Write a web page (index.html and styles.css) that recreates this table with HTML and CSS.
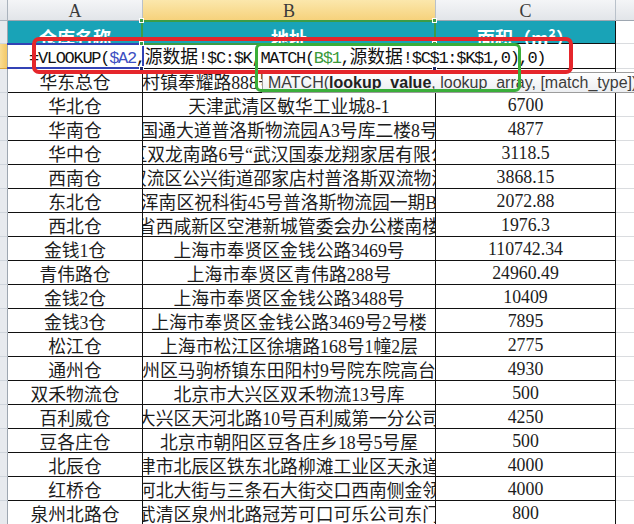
FILE: index.html
```html
<!DOCTYPE html>
<html lang="zh-CN">
<head>
<meta charset="utf-8">
<title>Sheet</title>
<link rel="stylesheet" href="styles.css">
</head>
<body>
<div class="sheet">
  <div class="grid">
    <div class="corner"></div>
    <div class="colhead">A</div>
    <div class="colhead sel">B</div>
    <div class="colhead">C</div>
    <div class="colhead rest-head"></div>

    <div class="rowhead r1"></div>
    <div class="th">仓库名称</div>
    <div class="th">地址</div>
    <div class="th">面积（m²）</div>
    <div class="rest r1"></div>

    <div class="rowhead sel r2"></div>
    <div class="edit r2"><span class="formula">=VLOOKUP(<span class="ref-a">$A2</span>,<span class="cjk">源数据</span>!$C:$K,MATCH(<span class="ref-b">B$1</span>,<span class="cjk">源数据</span>!$C$1:$K$1,0),0)</span></div>
    <div class="rest r2"></div>

    <div class="rowhead"></div><div class="td">华东总仓</div><div class="td"><span>青村镇奉耀路888号普洛斯物流园一号仓库</span></div><div class="td"></div><div class="rest"></div>
    <div class="rowhead"></div><div class="td">华北仓</div><div class="td"><span>天津武清区敏华工业城8-1</span></div><div class="td">6700</div><div class="rest"></div>
    <div class="rowhead"></div><div class="td">华南仓</div><div class="td"><span>区国通大道普洛斯物流园A3号库二楼8号仓</span></div><div class="td">4877</div><div class="rest"></div>
    <div class="rowhead"></div><div class="td">华中仓</div><div class="td"><span>区双龙南路6号“武汉国泰龙翔家居有限公</span></div><div class="td">3118.5</div><div class="rest"></div>
    <div class="rowhead"></div><div class="td">西南仓</div><div class="td"><span>双流区公兴街道邵家店村普洛斯双流物流</span></div><div class="td">3868.15</div><div class="rest"></div>
    <div class="rowhead"></div><div class="td">东北仓</div><div class="td"><span>阳浑南区祝科街45号普洛斯物流园一期B库</span></div><div class="td">2072.88</div><div class="rest"></div>
    <div class="rowhead"></div><div class="td">西北仓</div><div class="td"><span>省西咸新区空港新城管委会办公楼南楼</span></div><div class="td">1976.3</div><div class="rest"></div>
    <div class="rowhead"></div><div class="td">金钱1仓</div><div class="td"><span>上海市奉贤区金钱公路3469号</span></div><div class="td">110742.34</div><div class="rest"></div>
    <div class="rowhead"></div><div class="td">青伟路仓</div><div class="td"><span>上海市奉贤区青伟路288号</span></div><div class="td">24960.49</div><div class="rest"></div>
    <div class="rowhead"></div><div class="td">金钱2仓</div><div class="td"><span>上海市奉贤区金钱公路3488号</span></div><div class="td">10409</div><div class="rest"></div>
    <div class="rowhead"></div><div class="td">金钱3仓</div><div class="td"><span>上海市奉贤区金钱公路3469号2号楼</span></div><div class="td">7895</div><div class="rest"></div>
    <div class="rowhead"></div><div class="td">松江仓</div><div class="td"><span>上海市松江区徐塘路168号1幢2层</span></div><div class="td">2775</div><div class="rest"></div>
    <div class="rowhead"></div><div class="td">通州仓</div><div class="td"><span>通州区马驹桥镇东田阳村9号院东院高台库</span></div><div class="td">4930</div><div class="rest"></div>
    <div class="rowhead"></div><div class="td">双禾物流仓</div><div class="td"><span>北京市大兴区双禾物流13号库</span></div><div class="td">500</div><div class="rest"></div>
    <div class="rowhead"></div><div class="td">百利威仓</div><div class="td"><span>大兴区天河北路10号百利威第一分公司</span></div><div class="td">4250</div><div class="rest"></div>
    <div class="rowhead"></div><div class="td">豆各庄仓</div><div class="td"><span>北京市朝阳区豆各庄乡18号5号屋</span></div><div class="td">500</div><div class="rest"></div>
    <div class="rowhead"></div><div class="td">北辰仓</div><div class="td"><span>天津市北辰区铁东北路柳滩工业区天永道路</span></div><div class="td">4000</div><div class="rest"></div>
    <div class="rowhead"></div><div class="td">红桥仓</div><div class="td"><span>河北大街与三条石大街交口西南侧金领</span></div><div class="td">4000</div><div class="rest"></div>
    <div class="rowhead"></div><div class="td">泉州北路仓</div><div class="td"><span>武清区泉州北路冠芳可口可乐公司东门</span></div><div class="td">800</div><div class="rest"></div>
  </div>

  <div class="range-b1"></div>
  <div class="range-a2"></div>
  <div class="handle h1"></div>
  <div class="handle h2"></div>
  <div class="handle h3"></div>
  <div class="handle h4"></div>
  <div class="handle h5 dark"></div>
  <div class="handle h6 dark"></div>

  <div class="tooltip">MATCH(<b>lookup_value</b>, lookup_array, [match_type])</div>
  <div class="mark-red"></div>
  <div class="mark-green"></div>
</div>
</body>
</html>
```

FILE: styles.css
```css
* { box-sizing: border-box; }
html, body { margin: 0; padding: 0; background: #fff; }

.sheet {
  position: relative;
  width: 634px;
  height: 524px;
  overflow: hidden;
  background: #fff;
}

.grid {
  display: grid;
  grid-template-columns: 8px 135px 293px 180px 18px;
  grid-template-rows: 21px 23px 25px;
  grid-auto-rows: 24px;
  font-family: "Liberation Serif", "Noto Sans CJK SC", serif;
  font-size: 17.8px;
  color: #1c1c1c;
}

.corner {
  background: linear-gradient(#eef0f3, #dfe3e8);
  border-right: 1px solid #aab3bd;
  border-bottom: 1px solid #aab3bd;
}

.colhead {
  display: flex;
  align-items: center;
  justify-content: center;
  background: linear-gradient(#f4f5f7, #e2e5e9);
  border-right: 1px solid #b9c1ca;
  border-bottom: 1px solid #9ea7b1;
  color: #3a3a3a;
  font-family: "Liberation Serif", serif;
  font-size: 18px;
  padding-top: 2px;
}
.colhead.sel {
  background: linear-gradient(#fbe7ac, #f6d27c);
  border-bottom-color: #d8a640;
}
.rest-head { border-right: none; }

.rowhead {
  background: #e7eaee;
  border-right: 1px solid #9ea7b1;
  border-bottom: 1px solid #cfd5dc;
}
.rowhead.sel {
  background: linear-gradient(90deg, #f9dc92, #f4c865);
  border-bottom-color: #d8a640;
}

.th {
  display: flex;
  align-items: center;
  justify-content: center;
  background: #19a3b7;
  color: #fff;
  font-family: "Noto Sans CJK SC", sans-serif;
  font-weight: 700;
  font-size: 18px;
  border-right: 1px solid #111;
  border-bottom: 1px solid #111;
  padding-top: 9px;
}

.rest {
  border-bottom: 1px solid #dadcdf;
}

.edit {
  grid-column: 2 / 5;
  display: flex;
  align-items: center;
  padding-left: 21px;
  padding-bottom: 3px;
  background: #fff;
  border-right: 1px solid #111;
  border-bottom: 1px solid #111;
  white-space: nowrap;
  overflow: visible;
  color: #111;
}

.formula {
  font-family: "Liberation Mono", monospace;
  font-size: 17px;
  letter-spacing: -1.3px;
}
.formula .cjk {
  font-family: "Noto Sans CJK SC", sans-serif;
  font-size: 17.8px;
  letter-spacing: 0;
}
.ref-a { color: #3d4fc2; }
.ref-b { color: #3a9a3a; }

.td {
  display: flex;
  align-items: center;
  justify-content: center;
  overflow: hidden;
  white-space: nowrap;
  border-right: 1px solid #111;
  border-bottom: 1px solid #111;
  padding-top: 1px;
}
.td span { flex: none; }

/* reference highlights drawn over the grid */
.range-b1 {
  position: absolute;
  left: 141px;
  top: 20px;
  width: 295px;
  height: 25px;
  border: 2px solid #3c9c46;
}
.range-a2 {
  position: absolute;
  left: 7px;
  top: 43px;
  width: 137px;
  height: 26px;
  border: 2px solid #3242b5;
  border-left: none;
}
.handle {
  position: absolute;
  width: 5px;
  height: 5px;
  background: #3c9c46;
  border: 1px solid #fff;
}
.handle.dark { background: #1c2a6a; }
.h1 { left: 139px; top: 18px; }
.h2 { left: 139px; top: 41px; }
.h3 { left: 432px; top: 18px; }
.h4 { left: 432px; top: 41px; }
.h5 { left: 139px; top: 66px; background: #d9c35a; }
.h6 { left: 432px; top: 66px; }

.tooltip {
  position: absolute;
  left: 262px;
  top: 72px;
  width: 390px;
  height: 21px;
  padding-left: 5px;
  background: linear-gradient(#ffffff, #eceef1);
  border: 1px solid #9c9c9c;
  font-family: "Liberation Sans", sans-serif;
  font-size: 16px;
  line-height: 19px;
  color: #3c3c3c;
  white-space: nowrap;
}
.tooltip b { color: #222; }

.mark-red {
  position: absolute;
  left: 32px;
  top: 37px;
  width: 541px;
  height: 37px;
  border: 4px solid #e5262b;
  border-radius: 7px;
}
.mark-green {
  position: absolute;
  left: 255px;
  top: 43px;
  width: 266px;
  height: 49px;
  border: 3px solid #3aae3a;
  border-radius: 6px;
}
```
